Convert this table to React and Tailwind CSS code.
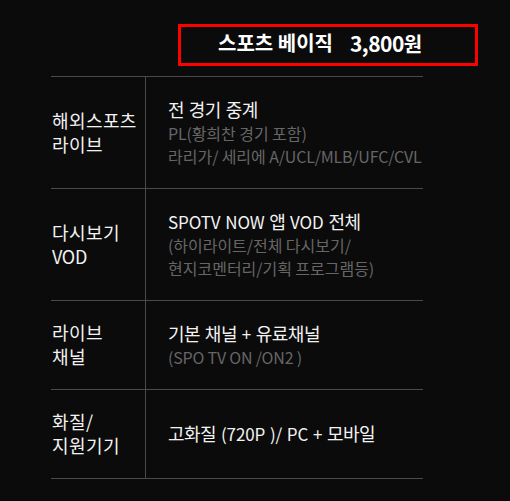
const HANGUL = /[\uAC00-\uD7A3\u3131-\u318E]/;

function split(text) {
  const out = [];
  let cur = "";
  let curH = null;
  for (const ch of text) {
    const h = HANGUL.test(ch);
    if (curH === null || h === curH) {
      cur += ch;
      curH = h;
    } else {
      out.push({ t: cur, h: curH });
      cur = ch;
      curH = h;
    }
  }
  if (cur) out.push({ t: cur, h: curH });
  return out;
}

function Mixed({ text, hClass, lClass }) {
  return (
    <>
      {split(text).map((s, i) => (
        <span key={i} className={s.h ? hClass : lClass}>
          {s.t}
        </span>
      ))}
    </>
  );
}

const rows = [
  {
    label: ["해외스포츠", "라이브"],
    title: "전 경기 중계",
    sub: ["PL(황희찬 경기 포함)", "라리가/ 세리에 A/UCL/MLB/UFC/CVL"],
    h: "h-[112px]",
  },
  {
    label: ["다시보기", "VOD"],
    title: "SPOTV NOW 앱 VOD 전체",
    sub: ["(하이라이트/전체 다시보기/", "현지코멘터리/기획 프로그램등)"],
    h: "h-[112px]",
  },
  {
    label: ["라이브", "채널"],
    title: "기본 채널 + 유료채널",
    sub: ["(SPO TV ON /ON2 )"],
    h: "h-[89px]",
  },
  {
    label: ["화질/", "지원기기"],
    title: "고화질 (720P )/ PC + 모바일",
    sub: [],
    h: "h-[89px]",
  },
];

export default function App() {
  return (
    <div
      className="w-[510px] h-[501px] bg-[#0b0b0b] text-white overflow-hidden"
      style={{ fontFamily: '"Noto Sans CJK KR", "Noto Sans", sans-serif' }}
    >
      <div className="pt-[24px] pl-[178px]">
        <div className="w-[300px] h-[42px] border-[3px] border-[#ff0000] flex items-center pl-[37px] pb-[4px]">
          <div className="flex items-center gap-[17px] font-bold leading-none">
            <span className="text-[20px] tracking-[0px]">스포츠 베이직</span>
            <span className="text-[20px] tracking-[-0.5px]">
              <span className="text-[21px]">3,800</span>원
            </span>
          </div>
        </div>
      </div>
      <div className="ml-[51px] w-[372px] mt-[10px] border-t border-[#4a4a4a]">
        {rows.map((r, i) => (
          <div key={i} className={`flex ${r.h} border-b border-[#4a4a4a]`}>
            <div className="w-[95px] border-r border-[#4a4a4a] flex flex-col justify-center pl-[1px] leading-[23px] text-[#f2f2f2]">
              {r.label.map((l, j) => (
                <div key={j} className="whitespace-nowrap">
                  <Mixed
                    text={l}
                    hClass="text-[18px] tracking-[0.4px]"
                    lClass="text-[18px] tracking-[-0.3px]"
                  />
                </div>
              ))}
            </div>
            <div className="flex-1 flex flex-col justify-center pl-[22px]">
              <div className="leading-[23px] text-[#f2f2f2] whitespace-nowrap">
                <Mixed
                  text={r.title}
                  hClass="text-[18px] tracking-[-0.5px]"
                  lClass="text-[17px] tracking-[-0.1px] [word-spacing:1px]"
                />
              </div>
              {r.sub.map((s, j) => (
                <div key={j} className="leading-[23px] text-[#666666] whitespace-nowrap">
                  <Mixed
                    text={s}
                    hClass="text-[16px] tracking-[0px]"
                    lClass="text-[16px] tracking-[-0.2px]"
                  />
                </div>
              ))}
            </div>
          </div>
        ))}
      </div>
    </div>
  );
}
